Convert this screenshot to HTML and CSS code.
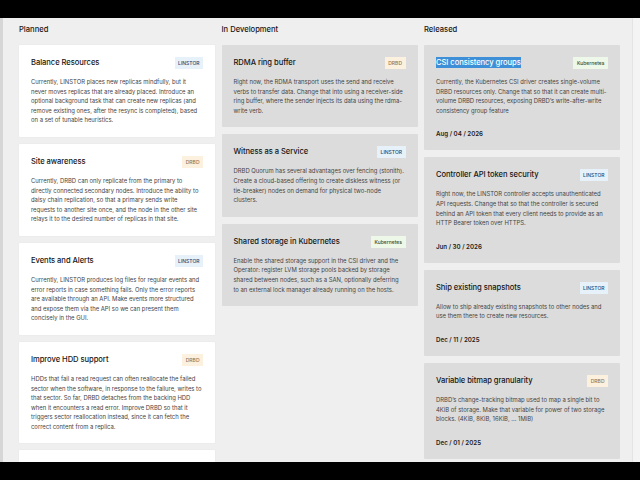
FILE: index.html
```html
<!DOCTYPE html>
<html>
<head>
<meta charset="utf-8">
<link rel="stylesheet" href="styles.css">
</head>
<body>
<div class="bar"></div>
<div class="screen">
  <div class="edge"></div>
  <main class="board">
    <section class="col">
      <h2 class="col-title">Planned</h2>
      <article class="card white">
        <div class="card-head"><h3>Balance Resources</h3><span class="tag linstor">LINSTOR</span></div>
        <p>Currently, LINSTOR places new replicas mindfully, but it never moves replicas that are already placed. Introduce an optional background task that can create new replicas (and remove existing ones, after the resync is completed), based on a set of tunable heuristics.</p>
      </article>
      <article class="card white">
        <div class="card-head"><h3>Site awareness</h3><span class="tag drbd">DRBD</span></div>
        <p>Currently, DRBD can only replicate from the primary to directly connected secondary nodes. Introduce the ability to daisy chain replication, so that a primary sends write requests to another site once, and the node in the other site relays it to the desired number of replicas in that site.</p>
      </article>
      <article class="card white">
        <div class="card-head"><h3>Events and Alerts</h3><span class="tag linstor">LINSTOR</span></div>
        <p>Currently, LINSTOR produces log files for regular events and error reports in case something fails. Only the error reports are available through an API. Make events more structured and expose them via the API so we can present them concisely in the GUI.</p>
      </article>
      <article class="card white">
        <div class="card-head"><h3>Improve HDD support</h3><span class="tag drbd">DRBD</span></div>
        <p>HDDs that fail a read request can often reallocate the failed sector when the software, in response to the failure, writes to that sector. So far, DRBD detaches from the backing HDD when it encounters a read error. Improve DRBD so that it triggers sector reallocation instead, since it can fetch the correct content from a replica.</p>
      </article>
      <article class="card white stub"></article>
    </section>
    <section class="col">
      <h2 class="col-title">In Development</h2>
      <article class="card">
        <div class="card-head"><h3>RDMA ring buffer</h3><span class="tag drbd">DRBD</span></div>
        <p>Right now, the RDMA transport uses the send and receive verbs to transfer data. Change that into using a receiver-side ring buffer, where the sender injects its data using the rdma-write verb.</p>
      </article>
      <article class="card">
        <div class="card-head"><h3>Witness as a Service</h3><span class="tag linstor">LINSTOR</span></div>
        <p>DRBD Quorum has several advantages over fencing (stonith). Create a cloud-based offering to create diskless witness (or tie-breaker) nodes on demand for physical two-node clusters.</p>
      </article>
      <article class="card">
        <div class="card-head"><h3>Shared storage in Kubernetes</h3><span class="tag k8s">Kubernetes</span></div>
        <p>Enable the shared storage support in the CSI driver and the Operator: register LVM storage pools backed by storage shared between nodes, such as a SAN, optionally deferring to an external lock manager already running on the hosts.</p>
      </article>
    </section>
    <section class="col">
      <h2 class="col-title">Released</h2>
      <article class="card">
        <div class="card-head"><h3><span class="sel">CSI consistency groups</span></h3><span class="tag k8s">Kubernetes</span></div>
        <p>Currently, the Kubernetes CSI driver creates single-volume DRBD resources only. Change that so that it can create multi-volume DRBD resources, exposing DRBD’s write-after-write consistency group feature</p>
        <div class="date">Aug / 04 / 2026</div>
      </article>
      <article class="card">
        <div class="card-head"><h3>Controller API token security</h3><span class="tag linstor">LINSTOR</span></div>
        <p>Right now, the LINSTOR controller accepts unauthenticated API requests. Change that so that the controller is secured behind an API token that every client needs to provide as an HTTP Bearer token over HTTPS.</p>
        <div class="date">Jun / 30 / 2026</div>
      </article>
      <article class="card">
        <div class="card-head"><h3>Ship existing snapshots</h3><span class="tag linstor">LINSTOR</span></div>
        <p>Allow to ship already existing snapshots to other nodes and use them there to create new resources.</p>
        <div class="date">Dec / 11 / 2025</div>
      </article>
      <article class="card">
        <div class="card-head"><h3>Variable bitmap granularity</h3><span class="tag drbd">DRBD</span></div>
        <p>DRBD’s change-tracking bitmap used to map a single bit to 4KiB of storage. Make that variable for power of two storage blocks. (4KiB, 8KiB, 16KiB, ... 1MiB)</p>
        <div class="date">Dec / 01 / 2025</div>
      </article>
    </section>
  </main>
  <div class="scroll"></div>
</div>
<div class="bar"></div>
</body>
</html>
```

FILE: styles.css
```css
* { box-sizing: border-box; }
html, body { margin: 0; padding: 0; background: #000; }
body {
  width: 640px;
  height: 480px;
  overflow: hidden;
  font-family: Inter, "Noto Sans", sans-serif;
  color: #151515;
}
.bar { height: 18px; background: #000; }
.screen {
  height: 444px;
  display: flex;
  background: #efefef;
  overflow: hidden;
}
.edge { width: 3px; flex: none; background: #d6d6d6; }
.scroll { width: 8px; flex: none; background: #f4f4f4; border-left: 1px solid #e4e4e4; }
.board {
  flex: 1;
  display: grid;
  grid-template-columns: 196px 196px 196px;
  column-gap: 6.5px;
  padding: 0 0 0 16px;
  align-items: start;
}
.col { display: flex; flex-direction: column; gap: 7px; }
.col-title {
  margin: 0;
  height: 20px;
  padding-top: 7px;
  font-size: 7.6px;
  font-weight: 500;
  line-height: 10px;
  color: #151515;
}
.card {
  background: #dcdcdc;
  padding: 12px 12px 12px 12px;
  border-radius: 1px;
}
.card.white { background: #fff; box-shadow: 0 0 2px rgba(0,0,0,0.05); }
.card.stub { height: 60px; }
.card-head {
  display: flex;
  justify-content: space-between;
  align-items: center;
  height: 12px;
}
.card-head h3 {
  margin: 0;
  font-size: 7.6px;
  font-weight: 500;
  line-height: 12px;
  letter-spacing: -0.05px;
  white-space: nowrap;
}
.sel {
  background: #3d8fd8;
  color: #fff;
  padding: 1px 0;
}
.tag {
  font-size: 5px;
  line-height: 12px;
  height: 12px;
  padding: 0 3.5px;
  font-weight: 500;
  white-space: nowrap;
}
.tag.linstor { background: #e7f1fa; color: #1f4670; }
.tag.drbd { background: #fcf1df; color: #8e7656; }
.tag.k8s { background: #eef8e8; color: #3a4d30; }
.card p {
  margin: 8px 0 0 0;
  font-size: 5.9px;
  line-height: 9.6px;
  color: #454545;
}
.date {
  margin-top: 14px;
  font-size: 6.2px;
  line-height: 9px;
  font-weight: 600;
  color: #1c1c1c;
}
```
